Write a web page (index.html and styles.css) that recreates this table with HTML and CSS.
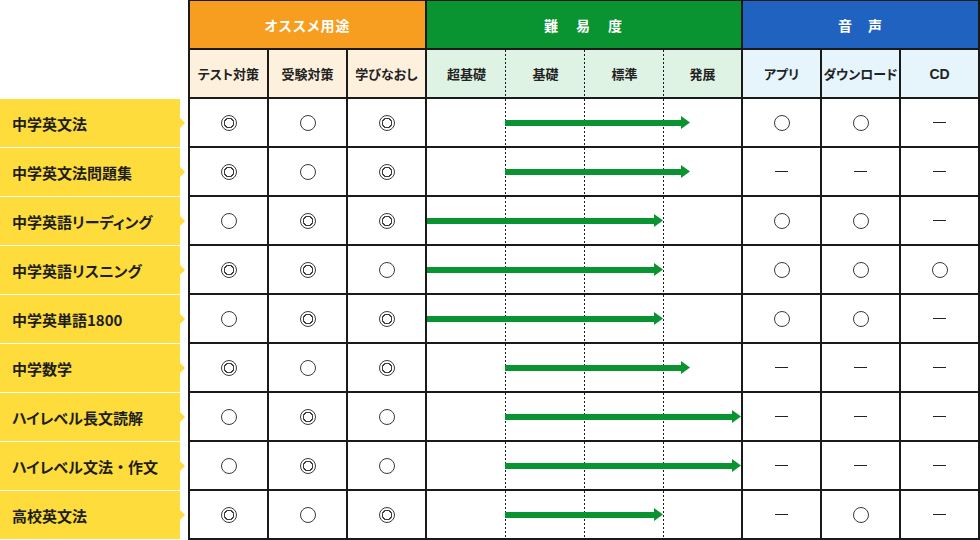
FILE: index.html
```html
<!DOCTYPE html>
<html lang="ja">
<head>
<meta charset="utf-8">
<title>教材比較表</title>
<link rel="stylesheet" href="styles.css">
</head>
<body>
<div class="page">
  <div class="labels">
    <div class="label">中学英文法</div>
    <div class="label">中学英文法問題集</div>
    <div class="label">中学英語リーディング</div>
    <div class="label">中学英語リスニング</div>
    <div class="label">中学英単語1800</div>
    <div class="label">中学数学</div>
    <div class="label">ハイレベル長文読解</div>
    <div class="label">ハイレベル文法<span class="nopalt">・</span>作文</div>
    <div class="label">高校英文法</div>
  </div>
  <div class="chart">
    <div class="gh orange span3">オススメ用途</div>
    <div class="gh green span4">難　易　度</div>
    <div class="gh blue span3">音　声</div>

    <div class="sh sh-o">テスト対策</div>
    <div class="sh sh-o">受験対策</div>
    <div class="sh sh-o">学びなおし</div>
    <div class="sh sh-g dotted">超基礎</div>
    <div class="sh sh-g dotted">基礎</div>
    <div class="sh sh-g dotted">標準</div>
    <div class="sh sh-g">発展</div>
    <div class="sh sh-b">アプリ</div>
    <div class="sh sh-b">ダウンロード</div>
    <div class="sh sh-b cd">CD</div>

    <!-- 中学英文法 -->
    <div class="cell"><span class="oo"></span></div>
    <div class="cell"><span class="o"></span></div>
    <div class="cell"><span class="oo"></span></div>
    <div class="diff"><div class="arrow" style="margin-left:78px;width:185px"><span class="shaft"></span><span class="head"></span></div></div>
    <div class="cell"><span class="o"></span></div>
    <div class="cell"><span class="o"></span></div>
    <div class="cell"><span class="dash"></span></div>

    <!-- 中学英文法問題集 -->
    <div class="cell"><span class="oo"></span></div>
    <div class="cell"><span class="o"></span></div>
    <div class="cell"><span class="oo"></span></div>
    <div class="diff"><div class="arrow" style="margin-left:78px;width:185px"><span class="shaft"></span><span class="head"></span></div></div>
    <div class="cell"><span class="dash"></span></div>
    <div class="cell"><span class="dash"></span></div>
    <div class="cell"><span class="dash"></span></div>

    <!-- 中学英語リーディング -->
    <div class="cell"><span class="o"></span></div>
    <div class="cell"><span class="oo"></span></div>
    <div class="cell"><span class="oo"></span></div>
    <div class="diff"><div class="arrow" style="margin-left:0;width:236px"><span class="shaft"></span><span class="head"></span></div></div>
    <div class="cell"><span class="o"></span></div>
    <div class="cell"><span class="o"></span></div>
    <div class="cell"><span class="dash"></span></div>

    <!-- 中学英語リスニング -->
    <div class="cell"><span class="oo"></span></div>
    <div class="cell"><span class="oo"></span></div>
    <div class="cell"><span class="o"></span></div>
    <div class="diff"><div class="arrow" style="margin-left:0;width:236px"><span class="shaft"></span><span class="head"></span></div></div>
    <div class="cell"><span class="o"></span></div>
    <div class="cell"><span class="o"></span></div>
    <div class="cell"><span class="o"></span></div>

    <!-- 中学英単語1800 -->
    <div class="cell"><span class="o"></span></div>
    <div class="cell"><span class="oo"></span></div>
    <div class="cell"><span class="oo"></span></div>
    <div class="diff"><div class="arrow" style="margin-left:0;width:236px"><span class="shaft"></span><span class="head"></span></div></div>
    <div class="cell"><span class="o"></span></div>
    <div class="cell"><span class="o"></span></div>
    <div class="cell"><span class="dash"></span></div>

    <!-- 中学数学 -->
    <div class="cell"><span class="oo"></span></div>
    <div class="cell"><span class="o"></span></div>
    <div class="cell"><span class="oo"></span></div>
    <div class="diff"><div class="arrow" style="margin-left:78px;width:185px"><span class="shaft"></span><span class="head"></span></div></div>
    <div class="cell"><span class="dash"></span></div>
    <div class="cell"><span class="dash"></span></div>
    <div class="cell"><span class="dash"></span></div>

    <!-- ハイレベル長文読解 -->
    <div class="cell"><span class="o"></span></div>
    <div class="cell"><span class="oo"></span></div>
    <div class="cell"><span class="o"></span></div>
    <div class="diff"><div class="arrow" style="margin-left:78px;width:236px"><span class="shaft"></span><span class="head"></span></div></div>
    <div class="cell"><span class="dash"></span></div>
    <div class="cell"><span class="dash"></span></div>
    <div class="cell"><span class="dash"></span></div>

    <!-- ハイレベル文法・作文 -->
    <div class="cell"><span class="o"></span></div>
    <div class="cell"><span class="oo"></span></div>
    <div class="cell"><span class="o"></span></div>
    <div class="diff"><div class="arrow" style="margin-left:78px;width:236px"><span class="shaft"></span><span class="head"></span></div></div>
    <div class="cell"><span class="dash"></span></div>
    <div class="cell"><span class="dash"></span></div>
    <div class="cell"><span class="dash"></span></div>

    <!-- 高校英文法 -->
    <div class="cell"><span class="oo"></span></div>
    <div class="cell"><span class="o"></span></div>
    <div class="cell"><span class="oo"></span></div>
    <div class="diff"><div class="arrow" style="margin-left:78px;width:158px"><span class="shaft"></span><span class="head"></span></div></div>
    <div class="cell"><span class="dash"></span></div>
    <div class="cell"><span class="o"></span></div>
    <div class="cell"><span class="dash"></span></div>
  </div>
</div>
</body>
</html>
```
FILE: styles.css
```css
* { box-sizing: border-box; }

html, body {
  margin: 0;
  padding: 0;
  background: #fff;
}

body {
  font-family: "Noto Sans CJK JP", "Noto Sans", sans-serif;
  color: #222;
  font-feature-settings: "palt";
}

.page {
  display: flex;
  width: 980px;
  height: 540px;
  overflow: hidden;
}

/* ---------- left labels ---------- */
.labels {
  width: 180px;
  margin-right: 8px;
  padding-top: 99px;
  display: flex;
  flex-direction: column;
  gap: 1px;
  flex: none;
}

.label {
  position: relative;
  height: 48px;
  background: #fddc3c;
  display: flex;
  align-items: center;
  padding-left: 12px;
  font-size: 15px;
  font-weight: 700;
  color: #1e1e1e;
  white-space: nowrap;
}

.nopalt { font-feature-settings: normal; }

.label::after {
  content: "";
  position: absolute;
  right: -5px;
  top: 50%;
  margin-top: -5px;
  width: 0;
  height: 0;
  border-left: 5px solid #fddc3c;
  border-top: 5px solid transparent;
  border-bottom: 5px solid transparent;
}

/* ---------- chart grid ---------- */
.chart {
  display: grid;
  grid-template-columns: repeat(10, 79px);
  grid-auto-rows: 49px;
  border-left: 2px solid #1a1a1a;
  border-top: 1px solid #1a1a1a;
  flex: none;
}

.chart > div {
  border-right: 2px solid #1a1a1a;
  border-bottom: 2px solid #1a1a1a;
  display: flex;
  align-items: center;
  justify-content: center;
}

.span3 { grid-column: span 3; }
.span4 { grid-column: span 4; }

.gh {
  color: #fff;
  font-size: 14px;
  font-weight: 700;
  letter-spacing: 1px;
}
.gh.orange { background: #f79d1f; }
.gh.green { background: #0a9331; letter-spacing: 2px; }
.gh.blue { background: #1f62c0; letter-spacing: 1px; }

.sh {
  font-size: 13px;
  font-weight: 700;
  color: #222;
  white-space: nowrap;
}
.sh-o { background: #fdf0dd; }
.sh-g { background: #dff3e5; }
.sh-b { background: #e6f5fb; }
.sh.cd { font-family: "Liberation Sans", Arial, sans-serif; font-size: 14px; }

.chart > .sh.dotted {
  border-right: none;
  background-image: repeating-linear-gradient(to bottom, #1a1a1a 0 2px, transparent 2px 4px);
  background-size: 1px 100%;
  background-position: right top;
  background-repeat: no-repeat;
}

.chart > .diff {
  grid-column: span 4;
  justify-content: flex-start;
  background-image:
    repeating-linear-gradient(to bottom, #1a1a1a 0 2px, transparent 2px 4px),
    repeating-linear-gradient(to bottom, #1a1a1a 0 2px, transparent 2px 4px),
    repeating-linear-gradient(to bottom, #1a1a1a 0 2px, transparent 2px 4px);
  background-size: 1px 100%, 1px 100%, 1px 100%;
  background-position: 78px 0, 157px 0, 236px 0;
  background-repeat: no-repeat;
}

.arrow {
  display: flex;
  align-items: center;
  flex: none;
}
.shaft {
  flex: 1;
  height: 6px;
  background: #0a9331;
}
.head {
  width: 9px;
  height: 13px;
  background: #0a9331;
  clip-path: polygon(0 0, 100% 50%, 0 100%);
  flex: none;
}

/* marks */
.o, .oo {
  display: block;
  width: 16px;
  height: 16px;
  border: 1px solid #3a3a3a;
  border-radius: 50%;
}
.oo {
  background: radial-gradient(circle closest-side, transparent 0 3.9px, #3a3a3a 4.2px 5.1px, transparent 5.4px);
}
.dash {
  display: block;
  width: 13px;
  height: 1px;
  background: #222;
}
```
